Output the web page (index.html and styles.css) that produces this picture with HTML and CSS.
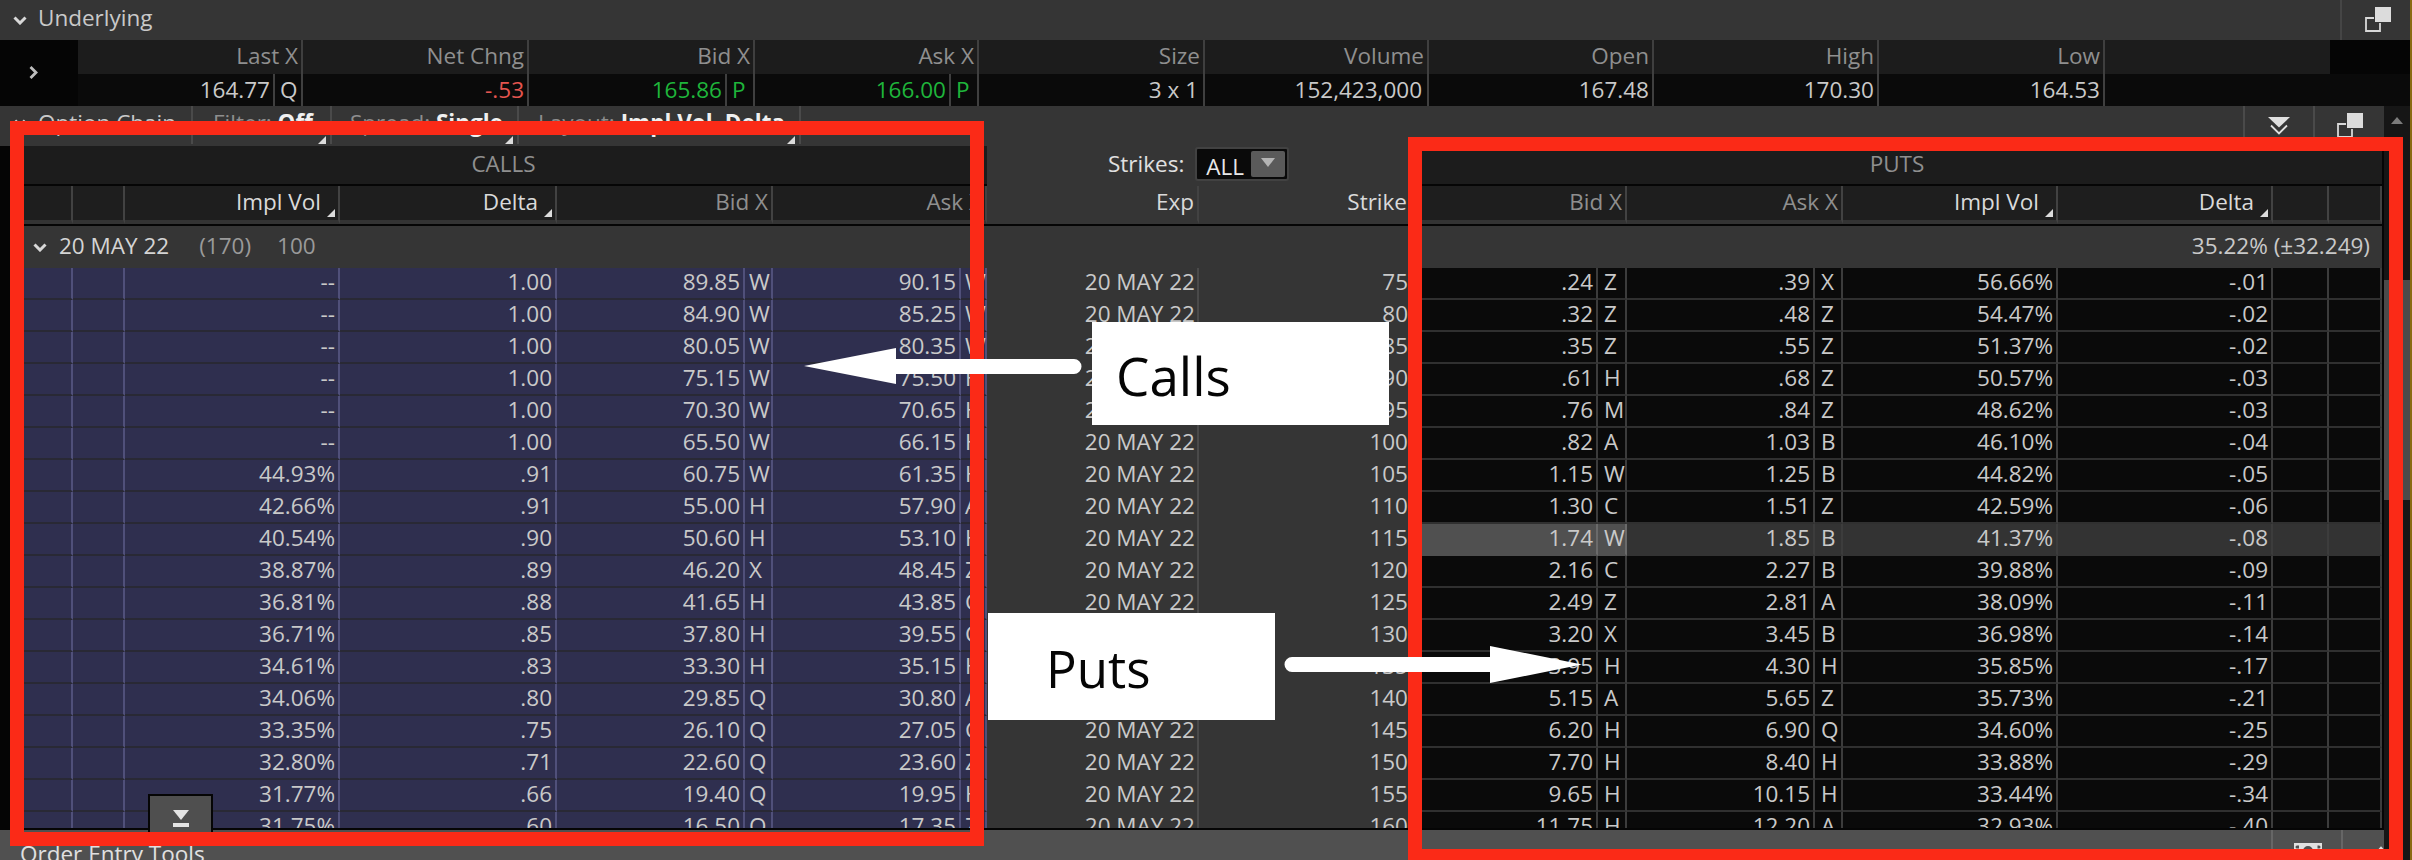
FILE: index.html
```html
<!DOCTYPE html>
<html lang="en">
<head>
<meta charset="utf-8">
<title>Option Chain</title>
<link rel="stylesheet" href="styles.css">
</head>
<body>
<div class="app">
  <header class="hdr">
    <svg class="chev-down" viewBox="0 0 14 9"><path d="M1.5 1.5 7 7l5.500-5.500"/></svg>
    <span class="hdr-title">Underlying</span>
    <div class="hdr-right">
      <svg class="copy" viewBox="0 0 26 25"><path d="M9 11H1v13h14v-8"/><rect x="10" y="0" width="16" height="15"/></svg>
    </div>
  </header>

  <section class="quote">
    <div class="q-arrow"><svg class="chev-right" viewBox="0 0 9 13"><path d="M1.500 1 7 6.500 1.500 12"/></svg></div>
    <div class="q-table">
      <div class="q-row q-head">
        <span class="q">Last X</span><span class="q">Net Chng</span><span class="q">Bid X</span><span class="q">Ask X</span><span class="q">Size</span><span class="q">Volume</span><span class="q">Open</span><span class="q">High</span><span class="q">Low</span>
      </div>
      <div class="q-row q-vals">
        <span class="q"><b class="qn">164.77</b><b class="qx">Q</b></span>
        <span class="q"><b class="qn neg">-.53</b></span>
        <span class="q"><b class="qn pos">165.86</b><b class="qx pos">P</b></span>
        <span class="q"><b class="qn pos">166.00</b><b class="qx pos">P</b></span>
        <span class="q q-wide"><b class="qn">3 x 1</b></span>
        <span class="q q-wide"><b class="qn">152,423,000</b></span>
        <span class="q"><b class="qn">167.48</b></span>
        <span class="q"><b class="qn">170.30</b></span>
        <span class="q"><b class="qn">164.53</b></span>
      </div>
    </div>
  </section>

  <div class="lower">
    <main class="main">
      <div class="toolbar">
        <div class="tb tb-1"><svg class="chev-small" viewBox="0 0 14 9"><path d="M1.500 1.500 7 7l5.500-5.500"/></svg>Option Chain</div>
        <div class="tb tb-2 corner">Filter: <strong>Off</strong></div>
        <div class="tb tb-3 corner">Spread: <strong>Single</strong></div>
        <div class="tb tb-4 corner">Layout: <strong>Impl Vol, Delta</strong></div>
        <div class="tb-right tb-chev"><svg class="dbl" viewBox="0 0 22 18"><polygon points="0,0 22,0 11,10.500"/><path d="M3 8.500l8 8 8-8"/></svg></div>
        <div class="tb-right tb-copy"><svg class="copy" viewBox="0 0 26 25"><path d="M9 11H1v13h14v-8"/><rect x="10" y="0" width="16" height="15"/></svg></div>
      </div>

      <div class="grid sec-row">
        <div class="sec-calls">CALLS</div>
        <div class="sec-mid">
          <span class="strikes-label">Strikes:</span>
          <div class="select"><span class="select-val">ALL</span><span class="select-btn"><svg class="select-tri" viewBox="0 0 14 9"><polygon points="0,0 14,0 7,9"/></svg></span></div>
        </div>
        <div class="sec-puts">PUTS</div>
      </div>

      <div class="grid col-row">
        <span class="g"></span>
        <span class="h"></span><span class="h"></span>
        <span class="h hb corner">Impl Vol</span><span class="h hb corner">Delta</span>
        <span class="h s2">Bid X</span><span class="h s2">Ask X</span>
        <span class="h hm hb">Exp</span><span class="h hm hb strike">Strike</span>
        <span class="h s2">Bid X</span><span class="h s2">Ask X</span>
        <span class="h hb corner">Impl Vol</span><span class="h hb corner">Delta</span>
        <span class="h"></span><span class="h"></span>
      </div>
      <div class="black-line"></div>

      <div class="group">
        <svg class="chev-group" viewBox="0 0 14 9"><path d="M1.500 1.500 7 7l5.500-5.500"/></svg>
        <span class="group-date">20 MAY 22</span>
        <span class="group-dim">(170)</span>
        <span class="group-dim">100</span>
        <span class="group-iv">35.22% (±32.249)</span>
      </div>

      <div class="rows">
        <div class="grid row"><span class="g"></span><span class="c"></span><span class="c"></span><span class="c">--</span><span class="c">1.00</span><span class="c">89.85</span><span class="c x">W</span><span class="c">90.15</span><span class="c x">W</span><span class="m">20 MAY 22</span><span class="m st">75</span><span class="p">.24</span><span class="p x">Z</span><span class="p">.39</span><span class="p x">X</span><span class="p">56.66%</span><span class="p">-.01</span><span class="p"></span><span class="p"></span></div>
        <div class="grid row"><span class="g"></span><span class="c"></span><span class="c"></span><span class="c">--</span><span class="c">1.00</span><span class="c">84.90</span><span class="c x">W</span><span class="c">85.25</span><span class="c x">W</span><span class="m">20 MAY 22</span><span class="m st">80</span><span class="p">.32</span><span class="p x">Z</span><span class="p">.48</span><span class="p x">Z</span><span class="p">54.47%</span><span class="p">-.02</span><span class="p"></span><span class="p"></span></div>
        <div class="grid row"><span class="g"></span><span class="c"></span><span class="c"></span><span class="c">--</span><span class="c">1.00</span><span class="c">80.05</span><span class="c x">W</span><span class="c">80.35</span><span class="c x">W</span><span class="m">20 MAY 22</span><span class="m st">85</span><span class="p">.35</span><span class="p x">Z</span><span class="p">.55</span><span class="p x">Z</span><span class="p">51.37%</span><span class="p">-.02</span><span class="p"></span><span class="p"></span></div>
        <div class="grid row"><span class="g"></span><span class="c"></span><span class="c"></span><span class="c">--</span><span class="c">1.00</span><span class="c">75.15</span><span class="c x">W</span><span class="c">75.50</span><span class="c x">H</span><span class="m">20 MAY 22</span><span class="m st">90</span><span class="p">.61</span><span class="p x">H</span><span class="p">.68</span><span class="p x">Z</span><span class="p">50.57%</span><span class="p">-.03</span><span class="p"></span><span class="p"></span></div>
        <div class="grid row"><span class="g"></span><span class="c"></span><span class="c"></span><span class="c">--</span><span class="c">1.00</span><span class="c">70.30</span><span class="c x">W</span><span class="c">70.65</span><span class="c x">H</span><span class="m">20 MAY 22</span><span class="m st">95</span><span class="p">.76</span><span class="p x">M</span><span class="p">.84</span><span class="p x">Z</span><span class="p">48.62%</span><span class="p">-.03</span><span class="p"></span><span class="p"></span></div>
        <div class="grid row"><span class="g"></span><span class="c"></span><span class="c"></span><span class="c">--</span><span class="c">1.00</span><span class="c">65.50</span><span class="c x">W</span><span class="c">66.15</span><span class="c x">H</span><span class="m">20 MAY 22</span><span class="m st">100</span><span class="p">.82</span><span class="p x">A</span><span class="p">1.03</span><span class="p x">B</span><span class="p">46.10%</span><span class="p">-.04</span><span class="p"></span><span class="p"></span></div>
        <div class="grid row"><span class="g"></span><span class="c"></span><span class="c"></span><span class="c">44.93%</span><span class="c">.91</span><span class="c">60.75</span><span class="c x">W</span><span class="c">61.35</span><span class="c x">H</span><span class="m">20 MAY 22</span><span class="m st">105</span><span class="p">1.15</span><span class="p x">W</span><span class="p">1.25</span><span class="p x">B</span><span class="p">44.82%</span><span class="p">-.05</span><span class="p"></span><span class="p"></span></div>
        <div class="grid row"><span class="g"></span><span class="c"></span><span class="c"></span><span class="c">42.66%</span><span class="c">.91</span><span class="c">55.00</span><span class="c x">H</span><span class="c">57.90</span><span class="c x">A</span><span class="m">20 MAY 22</span><span class="m st">110</span><span class="p">1.30</span><span class="p x">C</span><span class="p">1.51</span><span class="p x">Z</span><span class="p">42.59%</span><span class="p">-.06</span><span class="p"></span><span class="p"></span></div>
        <div class="grid row hl"><span class="g"></span><span class="c"></span><span class="c"></span><span class="c">40.54%</span><span class="c">.90</span><span class="c">50.60</span><span class="c x">H</span><span class="c">53.10</span><span class="c x">H</span><span class="m">20 MAY 22</span><span class="m st">115</span><span class="p hot">1.74</span><span class="p x hot">W</span><span class="p">1.85</span><span class="p x">B</span><span class="p">41.37%</span><span class="p">-.08</span><span class="p"></span><span class="p"></span></div>
        <div class="grid row"><span class="g"></span><span class="c"></span><span class="c"></span><span class="c">38.87%</span><span class="c">.89</span><span class="c">46.20</span><span class="c x">X</span><span class="c">48.45</span><span class="c x">Z</span><span class="m">20 MAY 22</span><span class="m st">120</span><span class="p">2.16</span><span class="p x">C</span><span class="p">2.27</span><span class="p x">B</span><span class="p">39.88%</span><span class="p">-.09</span><span class="p"></span><span class="p"></span></div>
        <div class="grid row"><span class="g"></span><span class="c"></span><span class="c"></span><span class="c">36.81%</span><span class="c">.88</span><span class="c">41.65</span><span class="c x">H</span><span class="c">43.85</span><span class="c x">C</span><span class="m">20 MAY 22</span><span class="m st">125</span><span class="p">2.49</span><span class="p x">Z</span><span class="p">2.81</span><span class="p x">A</span><span class="p">38.09%</span><span class="p">-.11</span><span class="p"></span><span class="p"></span></div>
        <div class="grid row"><span class="g"></span><span class="c"></span><span class="c"></span><span class="c">36.71%</span><span class="c">.85</span><span class="c">37.80</span><span class="c x">H</span><span class="c">39.55</span><span class="c x">C</span><span class="m">20 MAY 22</span><span class="m st">130</span><span class="p">3.20</span><span class="p x">X</span><span class="p">3.45</span><span class="p x">B</span><span class="p">36.98%</span><span class="p">-.14</span><span class="p"></span><span class="p"></span></div>
        <div class="grid row"><span class="g"></span><span class="c"></span><span class="c"></span><span class="c">34.61%</span><span class="c">.83</span><span class="c">33.30</span><span class="c x">H</span><span class="c">35.15</span><span class="c x">H</span><span class="m">20 MAY 22</span><span class="m st">135</span><span class="p">3.95</span><span class="p x">H</span><span class="p">4.30</span><span class="p x">H</span><span class="p">35.85%</span><span class="p">-.17</span><span class="p"></span><span class="p"></span></div>
        <div class="grid row"><span class="g"></span><span class="c"></span><span class="c"></span><span class="c">34.06%</span><span class="c">.80</span><span class="c">29.85</span><span class="c x">Q</span><span class="c">30.80</span><span class="c x">A</span><span class="m">20 MAY 22</span><span class="m st">140</span><span class="p">5.15</span><span class="p x">A</span><span class="p">5.65</span><span class="p x">Z</span><span class="p">35.73%</span><span class="p">-.21</span><span class="p"></span><span class="p"></span></div>
        <div class="grid row"><span class="g"></span><span class="c"></span><span class="c"></span><span class="c">33.35%</span><span class="c">.75</span><span class="c">26.10</span><span class="c x">Q</span><span class="c">27.05</span><span class="c x">C</span><span class="m">20 MAY 22</span><span class="m st">145</span><span class="p">6.20</span><span class="p x">H</span><span class="p">6.90</span><span class="p x">Q</span><span class="p">34.60%</span><span class="p">-.25</span><span class="p"></span><span class="p"></span></div>
        <div class="grid row"><span class="g"></span><span class="c"></span><span class="c"></span><span class="c">32.80%</span><span class="c">.71</span><span class="c">22.60</span><span class="c x">Q</span><span class="c">23.60</span><span class="c x">Z</span><span class="m">20 MAY 22</span><span class="m st">150</span><span class="p">7.70</span><span class="p x">H</span><span class="p">8.40</span><span class="p x">H</span><span class="p">33.88%</span><span class="p">-.29</span><span class="p"></span><span class="p"></span></div>
        <div class="grid row"><span class="g"></span><span class="c"></span><span class="c"></span><span class="c">31.77%</span><span class="c">.66</span><span class="c">19.40</span><span class="c x">Q</span><span class="c">19.95</span><span class="c x">H</span><span class="m">20 MAY 22</span><span class="m st">155</span><span class="p">9.65</span><span class="p x">H</span><span class="p">10.15</span><span class="p x">H</span><span class="p">33.44%</span><span class="p">-.34</span><span class="p"></span><span class="p"></span></div>
        <div class="grid row"><span class="g"></span><span class="c"></span><span class="c"></span><span class="c">31.75%</span><span class="c">.60</span><span class="c">16.50</span><span class="c x">Q</span><span class="c">17.35</span><span class="c x">Z</span><span class="m">20 MAY 22</span><span class="m st">160</span><span class="p">11.75</span><span class="p x">H</span><span class="p">12.20</span><span class="p x">A</span><span class="p">32.93%</span><span class="p">-.40</span><span class="p"></span><span class="p"></span></div>
      </div>
      <div class="black-line"></div>

      <footer class="bottom">
        <span class="bottom-title">Order Entry Tools</span>
        <div class="bb bb-money"><svg class="money" viewBox="0 0 28 17"><path fill-rule="evenodd" d="M0 1h28v16H0zM14 4a5 5 0 1 0 0 10a5 5 0 0 0 0-10zM3 3.500a1.500 1.500 0 1 0 0 3h2v-3zM25 3.500a1.500 1.500 0 1 1 0 3h-1.500v-3z"/></svg></div>
        <div class="bb bb-up"><svg class="up-tri" viewBox="0 0 12 7"><polygon points="6,0 12,7 0,7"/></svg></div>
      </footer>
    </main>

    <aside class="scroll">
      <svg class="scroll-up" viewBox="0 0 12 7"><polygon points="6,0 12,7 0,7"/></svg>
      <div class="thumb"></div>
    </aside>
  </div>

  <button class="expand"><svg class="expand-icon" viewBox="0 0 16 18"><polygon points="0,0 16,0 8,10"/><rect x="0" y="13" width="16" height="4"/></svg></button>

  <div class="mark mark-calls"></div>
  <div class="mark mark-puts"></div>
  <div class="label label-calls">Calls</div>
  <div class="label label-puts">Puts</div>
  <svg class="arrow arrow-left" viewBox="0 0 278 36"><path d="M0 18 92 0v11h178a7.500 7.500 0 0 1 0 15H92v10z"/></svg>
  <svg class="arrow arrow-right" viewBox="0 0 298 37"><path d="M298 18.500 206 0v11H8a7.500 7.500 0 0 0 0 15h198v11z"/></svg>
</div>
</body>
</html>
```
FILE: styles.css
```css
* { box-sizing: border-box; }
html, body { margin: 0; padding: 0; }
body {
  width: 2412px;
  height: 860px;
  overflow: hidden;
  background: #050505;
  font-family: "Open Sans", "Noto Sans", sans-serif;
  font-size: 22.5px;
  color: #c9c9c9;
}
svg { display: block; flex: none; }
.app {
  position: relative;
  width: 2412px;
  height: 860px;
  overflow: hidden;
  border-right: 2px solid #8a6a12;
}

/* top header */
.hdr { height: 40px; background: #353535; display: flex; align-items: center; padding-left: 13px; }
.chev-down { width: 14px; height: 9px; fill: none; stroke: #d8d8d8; stroke-width: 3; }
.hdr-title { margin-left: 11px; line-height: 34px; padding-bottom: 5px; }
.hdr-right { margin-left: auto; width: 70px; height: 40px; border-left: 2px solid #454545; padding: 7px 0 0 23px; }
.copy { width: 26px; height: 25px; }
.copy path { fill: none; stroke: #d8d8d8; stroke-width: 1.800; }
.copy rect { fill: #dcdcdc; }

/* quote strip */
.quote { height: 66px; display: flex; background: #050505; }
.q-arrow { width: 78px; padding: 26px 0 0 29px; }
.chev-right { width: 9px; height: 13px; fill: none; stroke: #bdbdbd; stroke-width: 2.800; }
.q-table { flex: 1; }
.q-row { display: grid; grid-template-columns: 225px 226px 226px 224px 226px 224px 225px 225px 226px; }
.q-head { height: 34px; width: 2252px; background: #1c1c1c; color: #8f8f8f; }
.q-vals { height: 32px; background: #0a0a0a; }
.q {
  display: flex;
  justify-content: flex-end;
  border-right: 2px solid #3f3f3f;
  padding-right: 3px;
  white-space: nowrap;
}
.q-head .q { line-height: 32px; }
.q-vals .q { padding-right: 0; line-height: 32px; }
.qn { font-weight: 400; flex: 1; text-align: right; padding-right: 3px; }
.q-wide .qn { padding-right: 5px; }
.qx { font-weight: 400; width: 28px; padding-left: 5px; border-left: 2px solid #3f3f3f; }
.neg { color: #e4554f; }
.pos { color: #1fb53b; }

/* lower layout */
.lower { display: flex; height: 754px; }
.main { width: 2384px; flex: none; }
.scroll { flex: 1; margin-left: 0; background: #161616; padding-top: 11px; }
.scroll-up { width: 12px; height: 7px; fill: #7c7c7c; margin-left: 7px; }
.thumb { height: 220px; margin-top: 156px; background: #4a4a4a; }

/* toolbar */
.toolbar { height: 40px; background: #353535; display: flex; }
.tb {
  height: 38px;
  line-height: 34px;
  color: #8e8e8e;
  border-right: 2px solid #4a4a4a;
  white-space: nowrap;
  position: relative;
}
.tb strong { color: #f0f0f0; font-weight: 700; }
.tb-1 { width: 193px; padding-left: 14px; color: #c9c9c9; display: flex; }
.chev-small { width: 12px; height: 8px; margin: 13px 12px 0 0; fill: none; stroke: #d0d0d0; stroke-width: 3; }
.tb-2 { width: 139px; padding-left: 20px; }
.tb-3 { width: 187px; padding-left: 18px; }
.tb-4 { width: 282px; padding-left: 19px; }
.tb-right { height: 38px; width: 70px; border-left: 2px solid #4a4a4a; }
.tb-chev { margin-left: auto; padding: 11px 0 0 23px; }
.tb-copy { width: 71px; padding: 7px 0 0 22px; }
.dbl { width: 22px; height: 18px; }
.dbl polygon { fill: #e0e0e0; }
.dbl path { fill: none; stroke: #e0e0e0; stroke-width: 1.800; }

.corner::after {
  content: "";
  position: absolute;
  right: 3px;
  bottom: 3px;
  border-style: solid;
  border-width: 0 0 8px 8px;
  border-color: transparent transparent #dcdcdc transparent;
}
.tb.corner::after { bottom: 0; right: 4px; }

/* shared grid of the chain */
.grid {
  display: grid;
  grid-template-columns: 20px 53px 52px 215px 217px 188px 28px 188px 26px 212px 213px 186px 29px 188px 28px 215px 215px 56px 53px;
  width: 2382px;
}
.sec-row { height: 40px; }
.sec-calls, .sec-puts {
  background: #1c1c1c;
  color: #8f8f8f;
  text-align: center;
  line-height: 35px;
  border-bottom: 2px solid #050505;
}
.sec-calls { grid-column: 2 / 10; }
.sec-mid { grid-column: 10 / 12; background: #353535; display: flex; align-items: flex-start; padding: 1px 0 0 121px; }
.sec-puts { grid-column: 12 / 20; }
.strikes-label { color: #e0e0e0; line-height: 34px; }
.select {
  margin-left: 11px;
  width: 94px;
  height: 34px;
  background: #0a0a0a;
  border: 2px solid #424242;
  border-radius: 3px;
  display: flex;
  padding: 2px;
  line-height: 32px;
}
.select-val { flex: 1; padding-left: 7px; color: #e8e8e8; }
.select-btn { width: 34px; height: 26px; background: #5a5a5a; border-radius: 2px; padding: 7px 0 0 10px; }
.select-tri { width: 14px; height: 9px; fill: #b4b4b4; }

.col-row { height: 38px; }
.g { background: #050505; }
.h {
  position: relative;
  background: #1e1e1e;
  color: #8f8f8f;
  border-right: 2px solid #424242;
  border-bottom: 4px solid #333;
  line-height: 31px;
  text-align: right;
  padding-right: 3px;
  white-space: nowrap;
}
.hb { color: #dadada; }
.h.corner { padding-right: 17px; }
.h.hm { background: #353535; border-bottom-color: #353535; }
.h.strike { border-right: 0; padding-right: 5px; }
.s2 { grid-column: span 2; }
.black-line { height: 2px; width: 2382px; background: #050505; }

.group {
  height: 42px;
  margin-left: 20px;
  width: 2362px;
  background: #353535;
  display: flex;
  align-items: center;
  padding: 0 12px 0 13px;
  line-height: 38px;
}
.group span { padding-bottom: 3px; }
.chev-group { width: 14px; height: 9px; fill: none; stroke: #d8d8d8; stroke-width: 3; }
.group-date { margin-left: 12px; color: #d4d4d4; }
.group-dim { margin-left: 30px; color: #9a9a9a; }
.group-dim + .group-dim { margin-left: 26px; }
.group-iv { margin-left: auto; }

/* rows */
.rows { height: 560px; overflow: hidden; }
.row { height: 32px; }
.c, .m, .p {
  height: 32px;
  line-height: 27px;
  text-align: right;
  padding-right: 3px;
  white-space: nowrap;
}
.c { background: #2f2f4f; border-right: 2px solid #50507a; border-bottom: 2px solid #292935; }
.m { background: #353535; padding-right: 2px; border-right: 2px solid #4a4a4a; }
.m.st { border-right: 0; padding-right: 4px; }
.p { background: #0a0a0a; border-right: 2px solid #3c3c3c; border-bottom: 2px solid #303030; }
.x { text-align: left; padding: 0 0 0 4px; }
.p.x { padding-left: 6px; }
.hl .p { background: #333; border-bottom-color: #333; }
.hl .p.hot { background: #505050; border-bottom-color: #505050; border-right-color: #6a6a6a; }

/* bottom bar */
.bottom { height: 30px; background: #505050; display: flex; }
.bottom-title { padding-left: 20px; line-height: 48px; color: #e0e0e0; }
.bb { height: 30px; border-left: 2px solid #666; }
.bb-money { margin-left: auto; width: 70px; padding: 12px 0 0 21px; }
.bb-up { width: 43px; padding: 16px 0 0 34px; }
.money { width: 28px; height: 17px; fill: #e0e0e0; }
.up-tri { width: 8px; height: 5px; fill: #e0e0e0; }

/* floating pieces */
.expand {
  position: absolute;
  left: 148px;
  top: 794px;
  width: 65px;
  height: 38px;
  padding: 0;
  margin: 0;
  background: #4f4f4f;
  border: 2px solid #050505;
  border-bottom: 0;
}
.expand-icon { width: 16px; height: 18px; fill: #e4e4e4; margin: 9px 0 0 23px; }

.mark { position: absolute; border: 14px solid #fb2a17; }
.mark-calls { left: 10px; top: 121px; width: 974px; height: 725px; }
.mark-puts { left: 1408px; top: 137px; width: 995px; height: 726px; }

.label {
  position: absolute;
  background: #fff;
  color: #050505;
  display: flex;
  align-items: center;
}
.label-calls { left: 1092px; top: 322px; width: 297px; height: 103px; padding: 4px 0 0 24px; font-size: 53px; }
.label-puts { left: 988px; top: 613px; width: 287px; height: 107px; padding: 2px 0 0 58px; font-size: 51px; }

.arrow { position: absolute; fill: #fff; }
.arrow-left { left: 804px; top: 348px; width: 278px; height: 36px; }
.arrow-right { left: 1284px; top: 646px; width: 298px; height: 37px; }
```
